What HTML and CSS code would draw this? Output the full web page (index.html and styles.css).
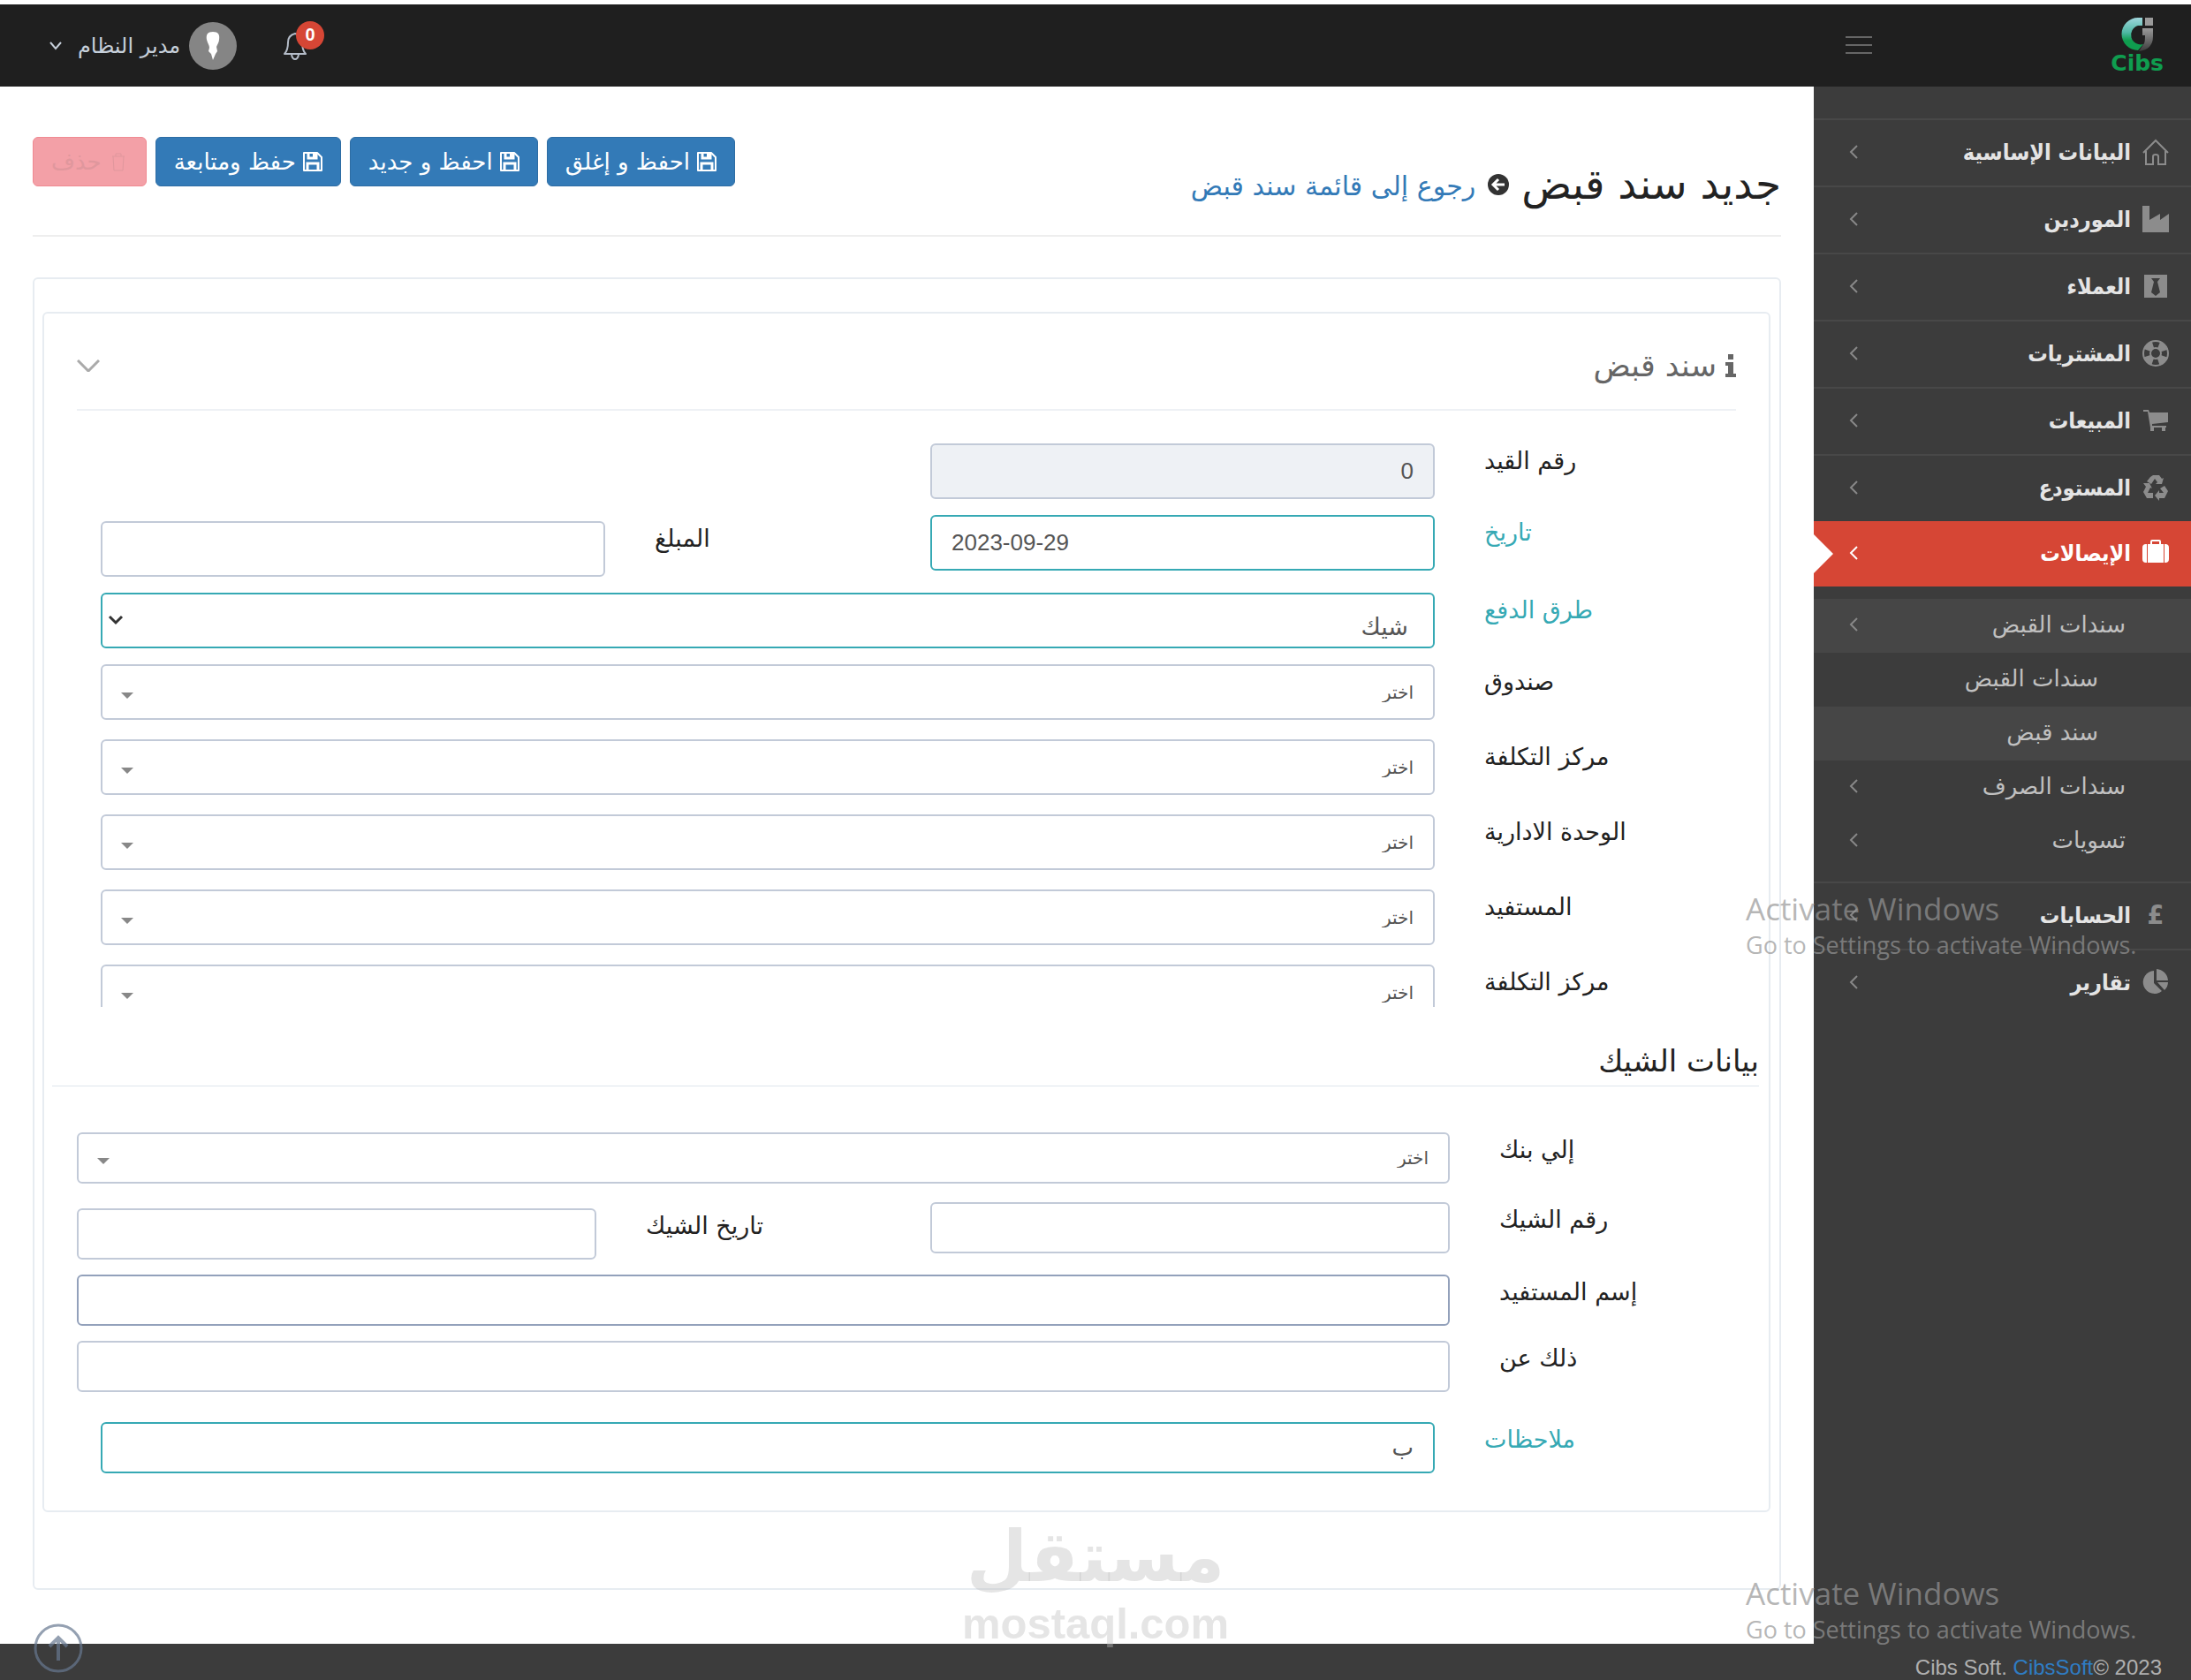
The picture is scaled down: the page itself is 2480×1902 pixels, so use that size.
FILE: index.html
```html
<!DOCTYPE html>
<html lang="ar" dir="rtl">
<head>
  <meta charset="UTF-8" />
  <meta name="viewport" content="width=device-width, initial-scale=1" />
  <title>جديد سند قبض</title>
  <link rel="stylesheet" href="styles.css">
</head>
<body>
  <!-- Shared icon shapes -->
  <svg class="sprite" aria-hidden="true">
    <symbol id="i-save" viewBox="0 0 22 22">
      <path d="M1 1h15l5 5v15H1z" fill="none" stroke="currentColor" stroke-width="2" stroke-linejoin="round"/>
      <path d="M5 21v-8h12v8M6 1v6h9V1" fill="none" stroke="currentColor" stroke-width="3"/>
      <path d="M11 1h3v5h-3z" fill="currentColor"/>
    </symbol>
    <symbol id="i-left" viewBox="0 0 10 16">
      <path d="M9 1L2 8l7 7" fill="none" stroke="currentColor" stroke-width="2"/>
    </symbol>
    <symbol id="i-caret" viewBox="0 0 14 7">
      <path d="M0 0h14L7 7z" fill="currentColor"/>
    </symbol>
  </svg>

  <header class="topbar">
    <div class="brand">
      <a class="logo" href="#">
        <svg class="logo-mark" viewBox="0 0 36 38">
          <defs>
            <linearGradient id="gGreen" x1="0" y1="0" x2="0" y2="1">
              <stop offset="0" stop-color="#9fd6dc"/>
              <stop offset="0.45" stop-color="#4fb8a5"/>
              <stop offset="0.7" stop-color="#0f9d4f"/>
            </linearGradient>
            <linearGradient id="gGrey" x1="0" y1="0" x2="0" y2="1">
              <stop offset="0" stop-color="#9a9a9a"/>
              <stop offset="1" stop-color="#3c3c3c"/>
            </linearGradient>
          </defs>
          <path d="M24 0H19A18 18 0 0 0 19 37L25 30A10 10 0 0 1 19 9H24Z" fill="url(#gGreen)"/>
          <path d="M27 0h9v9h-9z" fill="#9a9a9a"/>
          <path d="M24 12h12v9q0 15-16 17l6-9q1-2 1-9h-3z" fill="url(#gGrey)"/>
        </svg>
        <span class="logo-text">Cibs</span>
      </a>
      <button class="menu-toggle" type="button" aria-label="القائمة"><i></i><i></i><i></i></button>
    </div>
    <div class="top-menu">
      <button class="bell" type="button">
        <svg viewBox="0 0 28 34"><path d="M2 26q4-4 4-13 0-8 8-10 8 2 8 10 0 9 4 13zM10 27q1 5 4 5t4-5" fill="none" stroke="#b4bcc8" stroke-width="2" stroke-linejoin="round"/></svg>
        <span class="badge">0</span>
      </button>
      <button class="user" type="button">
        <svg class="avatar" viewBox="0 0 54 54"><circle cx="27" cy="27" r="27" fill="#858585"/><path d="M27 11c-6 0-8 3-7 9 1 4 3 6 3 9l-1 4 3 3 2 7 3-7 2-3-1-5c1-3 3-5 3-8 1-6-1-9-7-9z" fill="#fff"/></svg>
        <span>مدير النظام</span>
        <svg class="user-arrow" viewBox="0 0 14 10"><path d="M1 1l6 7 6-7" fill="none" stroke="#c6cfda" stroke-width="2"/></svg>
      </button>
    </div>
  </header>

  <div class="page">
    <nav class="sidebar">
      <ul class="menu">
        <li><a href="#">
          <svg class="icon" viewBox="0 0 30 30"><path d="M1 16L15 2l14 14M4 14v15h8v-9q0-2 3-2t3 2v9h8V14" fill="none" stroke="currentColor" stroke-width="2"/></svg>
          <span>البيانات الإساسية</span><svg class="chev"><use href="#i-left"/></svg></a></li>
        <li><a href="#">
          <svg class="icon" viewBox="0 0 30 30"><path d="M0 0h8v16l12-7v7l10-7v21H0z" fill="currentColor"/></svg>
          <span>الموردين</span><svg class="chev"><use href="#i-left"/></svg></a></li>
        <li><a href="#">
          <svg class="icon" viewBox="0 0 30 30"><path d="M2 2h26v26H2z" fill="currentColor"/><path d="M10 6h10l-3 4 3 12-5 4-5-4 3-12z" fill="#3c3c3c"/></svg>
          <span>العملاء</span><svg class="chev"><use href="#i-left"/></svg></a></li>
        <li><a href="#">
          <svg class="icon" viewBox="0 0 30 30"><circle cx="15" cy="15" r="14" fill="none" stroke="currentColor" stroke-width="2"/><circle cx="15" cy="15" r="10" fill="none" stroke="currentColor" stroke-width="9" stroke-dasharray="9 6.71" stroke-dashoffset="-3.35"/><circle cx="15" cy="15" r="6" fill="none" stroke="currentColor" stroke-width="2"/></svg>
          <span>المشتريات</span><svg class="chev"><use href="#i-left"/></svg></a></li>
        <li><a href="#">
          <svg class="icon" viewBox="0 0 30 30"><path d="M1 3h6l1 3h21v11l-18 2v2h16v2H9L6 5H1z" fill="currentColor"/><path d="M9 23h4v4H9zM22 23h4v4h-4z" fill="currentColor"/></svg>
          <span>المبيعات</span><svg class="chev"><use href="#i-left"/></svg></a></li>
        <li><a href="#">
          <svg class="icon" viewBox="0 0 30 30"><g fill="currentColor"><path d="M9 3l3-2h7l3 4 2-1-2 7h-7l2-2-3-4-4 6-5-3z"/><path d="M25 13l4 6-4 8h-6v3l-5-6 5-6v3h5l-4-5z"/><path d="M1 10h7l3 6-2-1-3 6h6v6H5l-4-7 3-6z"/></g></svg>
          <span>المستودع</span><svg class="chev"><use href="#i-left"/></svg></a></li>
        <li class="active"><a href="#">
          <svg class="icon" viewBox="0 0 30 30"><path d="M5 5v21H4q-4 0-4-4V9q0-4 4-4zM25 5h1q4 0 4 4v13q0 4-4 4h-1zM9 5V2q0-2 2-2h8q2 0 2 2v3h3v21H6V5zM11 2v3h8V2z" fill="currentColor" fill-rule="evenodd"/></svg>
          <span>الإيصالات</span><svg class="chev"><use href="#i-left"/></svg></a>
          <ul class="submenu">
            <li class="open"><a href="#"><span>سندات القبض</span><svg class="chev"><use href="#i-left"/></svg></a></li>
            <li class="level3"><a href="#"><span>سندات القبض</span></a></li>
            <li class="level3 open"><a href="#"><span>سند قبض</span></a></li>
            <li><a href="#"><span>سندات الصرف</span><svg class="chev"><use href="#i-left"/></svg></a></li>
            <li><a href="#"><span>تسويات</span><svg class="chev"><use href="#i-left"/></svg></a></li>
          </ul>
        </li>
        <li><a href="#"><b class="icon pound">£</b>
          <span>الحسابات</span><svg class="chev"><use href="#i-left"/></svg></a></li>
        <li><a href="#">
          <svg class="icon" viewBox="0 0 30 30"><path d="M13 2v14l9 9A13 13 0 1 1 13 2zM16 0a14 14 0 0 1 13 13H16zM17 15h12q0 5-4 9z" fill="currentColor"/></svg>
          <span>تقارير</span><svg class="chev"><use href="#i-left"/></svg></a></li>
      </ul>
    </nav>

    <main class="content">
      <div class="page-head">
        <h1>جديد سند قبض
          <svg class="back-icon" viewBox="0 0 24 24"><circle cx="12" cy="12" r="12" fill="#333"/><path d="M19 12H7M12 6l-6 6 6 6" fill="none" stroke="#fff" stroke-width="3"/></svg>
          <a href="#">رجوع إلى قائمة سند قبض</a>
        </h1>
        <div class="actions">
          <button class="btn" type="submit" form="voucher"><svg><use href="#i-save"/></svg>احفظ و إغلق</button>
          <button class="btn" type="submit" form="voucher"><svg><use href="#i-save"/></svg>احفظ و جديد</button>
          <button class="btn" type="submit" form="voucher"><svg><use href="#i-save"/></svg>حفظ ومتابعة</button>
          <button class="btn btn-delete" type="button" disabled><svg viewBox="0 0 22 22"><path d="M4 5h14M8 5V2h6v3M5 5l1 16h10l1-16" fill="none" stroke="currentColor"/></svg>حذف</button>
        </div>
      </div>

      <form class="portlet" id="voucher">
        <div class="panel">
          <div class="panel-head">
            <h2><svg viewBox="0 0 12 26"><path d="M3 0h6v6H3zM0 9h9v13h3v4H0v-4h3v-9H0z" fill="#666"/></svg>سند قبض</h2>
            <button class="collapse" type="button" aria-label="طي"><svg viewBox="0 0 26 14"><path d="M1 1l12 12L25 1" fill="none" stroke="#aaa" stroke-width="3"/></svg></button>
          </div>

          <div class="rows">
            <div class="row tight">
              <label for="entryNo">رقم القيد</label>
              <input type="text" id="entryNo" value="0" readonly />
            </div>
            <div class="row tight success">
              <label for="date">تاريخ</label>
              <input type="text" id="date" value="2023-09-29" dir="ltr" />
              <label class="plain lower" for="amount">المبلغ</label>
              <input class="plain lower" type="text" id="amount" />
            </div>
            <div class="row tight success">
              <label for="payment">طرق الدفع</label>
              <div class="select wide">
                <select class="native" id="payment"><option>شيك</option></select>
                <svg class="native-arrow" viewBox="0 0 18 12"><path d="M2 2l7 7 7-7" fill="none" stroke="#333" stroke-width="3"/></svg>
              </div>
            </div>
            <div class="row">
              <label for="box">صندوق</label>
              <div class="select wide"><select id="box"><option>اختر</option></select><svg class="caret"><use href="#i-caret"/></svg></div>
            </div>
            <div class="row">
              <label for="costCenter">مركز التكلفة</label>
              <div class="select wide"><select id="costCenter"><option>اختر</option></select><svg class="caret"><use href="#i-caret"/></svg></div>
            </div>
            <div class="row">
              <label for="unit">الوحدة الادارية</label>
              <div class="select wide"><select id="unit"><option>اختر</option></select><svg class="caret"><use href="#i-caret"/></svg></div>
            </div>
            <div class="row">
              <label for="payee">المستفيد</label>
              <div class="select wide"><select id="payee"><option>اختر</option></select><svg class="caret"><use href="#i-caret"/></svg></div>
            </div>
            <div class="row cut">
              <label for="costCenter2">مركز التكلفة</label>
              <div class="select wide"><select id="costCenter2"><option>اختر</option></select><svg class="caret"><use href="#i-caret"/></svg></div>
            </div>
          </div>

          <h3>بيانات الشيك</h3>
          <div class="rows cheque">
            <div class="row">
              <label for="bank">إلي بنك</label>
              <div class="select wide"><select id="bank"><option>اختر</option></select><svg class="caret"><use href="#i-caret"/></svg></div>
            </div>
            <div class="row tight">
              <label for="chequeNo">رقم الشيك</label>
              <input type="text" id="chequeNo" />
              <label class="lower" for="chequeDate">تاريخ الشيك</label>
              <input class="lower" type="text" id="chequeDate" />
            </div>
            <div class="row tight">
              <label for="payeeName">إسم المستفيد</label>
              <input class="wide focused" type="text" id="payeeName" />
            </div>
            <div class="row tight">
              <label for="about">ذلك عن</label>
              <input class="wide" type="text" id="about" />
            </div>
          </div>
          <div class="rows notes">
            <div class="row success">
              <label for="notes">ملاحظات</label>
              <input class="wide" type="text" id="notes" value="ب" />
            </div>
          </div>
        </div>
      </form>
    </main>
  </div>

  <footer class="footer" dir="ltr">Cibs Soft. <a href="#">CibsSoft</a>© 2023</footer>

  <a class="to-top" href="#" aria-label="أعلى"><svg viewBox="0 0 56 56"><circle cx="28" cy="28" r="26" fill="none" stroke="#687991" stroke-width="3"/><path d="M28 42V16M18 26l10-10 10 10" fill="none" stroke="#687991" stroke-width="4"/></svg></a>

  <div class="activate first" dir="ltr"><p>Activate Windows</p><p>Go to Settings to activate Windows.</p></div>
  <div class="activate second" dir="ltr"><p>Activate Windows</p><p>Go to Settings to activate Windows.</p></div>
  <div class="mostaql"><span>مستقل</span><span dir="ltr">mostaql.com</span></div>
</body>
</html>
```

FILE: styles.css
```css
:root {
  --dark: #3c3c3c;
  --topbar: #1f1f1f;
  --red: #d64635;
  --blue: #337ab7;
  --teal: #36a9b4;
  --border: #c2cad8;
  --line: #e7ecf1;
  --sidebar: 427px;
}

* {
  box-sizing: border-box;
}

body {
  margin: 0;
  position: relative;
  min-height: 100vh;
  display: flex;
  flex-direction: column;
  background: var(--dark);
  font-family: "DejaVu Sans", sans-serif;
  font-size: 26px;
  color: #222;
}

button, input, select {
  font: inherit;
  color: inherit;
}

button {
  background: none;
  border: none;
  padding: 0;
  cursor: pointer;
}

a {
  text-decoration: none;
}

ul, h1, h2, h3, p {
  list-style: none;
  margin: 0;
  padding: 0;
  font-weight: normal;
}

svg {
  display: block;
  flex: none;
}

.sprite {
  position: absolute;
  width: 0;
  height: 0;
}

/* Top bar */
.topbar {
  height: 98px;
  border-top: 5px solid #fff;
  background: var(--topbar);
  display: flex;
  justify-content: space-between;
}

.brand {
  width: var(--sidebar);
  padding: 0 31px 0 36px;
  display: flex;
  justify-content: space-between;
  align-items: flex-start;
}

.logo {
  display: flex;
  flex-direction: column;
  align-items: center;
  padding-top: 15px;
}

.logo-mark {
  width: 36px;
  height: 38px;
}

.logo-text {
  font-size: 25px;
  line-height: 28px;
  font-weight: bold;
  color: #0f9d4f;
}

.menu-toggle {
  width: 30px;
  height: 92px;
  display: flex;
  flex-direction: column;
  justify-content: center;
  gap: 7px;
}

.menu-toggle i {
  height: 2px;
  background: #666;
}

.top-menu {
  display: flex;
  align-items: center;
  gap: 52px;
  padding-left: 56px;
}

.bell {
  position: relative;
}

.bell svg {
  width: 28px;
  height: 34px;
}

.badge {
  position: absolute;
  top: -11px;
  left: 15px;
  width: 32px;
  height: 32px;
  border-radius: 50%;
  background: var(--red);
  color: #fff;
  font: bold 20px/30px "Liberation Sans", sans-serif;
}

.user {
  display: flex;
  align-items: center;
  gap: 10px;
  font-size: 24px;
  color: #c6cfda;
}

.avatar {
  width: 54px;
  height: 54px;
}

.user-arrow {
  width: 14px;
  height: 10px;
  margin-right: 8px;
}

/* Sidebar */
.page {
  flex: 1;
  display: flex;
}

.sidebar {
  width: var(--sidebar);
  flex: none;
  padding-top: 36px;
}

.menu > li {
  border-top: 2px solid #484848;
}

.menu a {
  display: flex;
  align-items: center;
  height: 74px;
  padding: 0 25px 2px 40px;
  color: #e4e4e4;
}

.menu > li > a {
  font-family: "DejaVu Sans Condensed", "DejaVu Sans", sans-serif;
  font-size: 25px;
  font-weight: bold;
}

.icon {
  width: 30px;
  height: 30px;
  margin-left: 13px;
  color: #8c8c8c;
}

.pound {
  font-size: 30px;
  line-height: 30px;
  text-align: center;
}

.chev {
  width: 10px;
  height: 16px;
  margin-right: auto;
  color: #888;
}

.menu > .active {
  border: none;
  padding-bottom: 15px;
}

.active > a {
  position: relative;
  background: var(--red);
  color: #fff;
}

.active > a .icon, .active > a .chev {
  color: #fff;
}

.active > a::after {
  content: "";
  position: absolute;
  left: 0;
  top: 15px;
  border: 22px solid transparent;
  border-left-color: #fff;
  border-right: none;
}

.submenu {
  padding-top: 14px;
}

.submenu a {
  height: 61px;
  padding-right: 74px;
  padding-bottom: 4px;
  color: #c0c0c0;
}

.submenu .level3 a {
  padding-right: 105px;
}

.submenu .open {
  background: #464646;
}

/* Content */
.content {
  flex: 1;
  min-width: 0;
  background: #fff;
  padding: 57px 37px 61px;
}

.page-head {
  display: flex;
  justify-content: space-between;
  align-items: flex-start;
  height: 113px;
  border-bottom: 2px solid #eee;
}

.page-head h1 {
  display: flex;
  align-items: center;
  gap: 14px;
  padding-top: 24px;
  font-size: 47px;
  line-height: 56px;
}

.page-head h1 a {
  font-size: 30px;
  padding-top: 4px;
  color: var(--blue);
}

.back-icon {
  width: 24px;
  height: 24px;
}

.actions {
  display: flex;
  gap: 10px;
}

.btn {
  display: flex;
  align-items: center;
  gap: 8px;
  height: 56px;
  padding: 0 20px;
  border: 1px solid #2e6da4;
  border-radius: 6px;
  background: var(--blue);
  color: #fff;
}

.btn svg {
  width: 22px;
  height: 22px;
}

.btn-delete {
  background: #f3a0a7;
  border-color: #f08a92;
  color: #e0979d;
}

.portlet {
  margin-top: 46px;
  border: 2px solid var(--line);
  border-radius: 6px;
  padding: 37px 10px 86px 9px;
}

.panel {
  border: 2px solid var(--line);
  border-radius: 6px;
  padding-bottom: 42px;
}

.panel-head {
  display: flex;
  justify-content: space-between;
  align-items: center;
  height: 110px;
  margin: 0 37px;
  padding-top: 10px;
  border-bottom: 2px solid #eef1f5;
}

.panel-head h2 {
  display: flex;
  align-items: center;
  gap: 10px;
  font-size: 35px;
  line-height: 50px;
  color: #666;
}

.panel-head h2 svg {
  width: 12px;
  height: 26px;
}

.collapse svg {
  width: 26px;
  height: 14px;
}

/* Form rows */
.rows {
  --field: 63px;
  --mid-label: 256px;
  padding: 37px 37px 0 64px;
}

.row {
  display: grid;
  grid-template-columns: 285px 1fr var(--mid-label) 1fr;
  column-gap: 56px;
  align-items: start;
  margin-bottom: 22px;
}

.row.tight {
  margin-bottom: 18px;
}

.row.cut {
  height: 48px;
  margin: 0;
  overflow: hidden;
}

.row label {
  text-align: left;
  font-size: 27px;
  line-height: 40px;
  white-space: nowrap;
}

.wide {
  grid-column: 2 / -1;
}

.lower {
  margin-top: 7px;
}

.row input, .row select {
  width: 100%;
  height: var(--field);
  border: 2px solid var(--border);
  border-radius: 6px;
  background: #fff;
  padding: 0 22px;
  color: #555;
  font-size: 26px;
  font-family: "Liberation Sans", "DejaVu Sans", sans-serif;
}

.row input[readonly] {
  background: #eef1f5;
}

.row input.focused {
  border-color: #93a1bb;
}

.row.success label:not(.plain) {
  color: var(--teal);
}

.row.success input:not(.plain), .row.success select {
  border-color: var(--teal);
}

.select {
  position: relative;
}

.row select {
  appearance: none;
  font-size: 20px;
}

.row select.native {
  font-size: 27px;
  padding: 14px 28px 0;
}

.caret {
  position: absolute;
  left: 23px;
  top: 50%;
  width: 14px;
  height: 7px;
  color: #888;
}

.native-arrow {
  position: absolute;
  left: 8px;
  top: 25px;
  width: 18px;
  height: 12px;
}

.panel h3 {
  margin: 0 11px 0 9px;
  padding: 36px 0 3px;
  border-bottom: 1px solid #dfe5ec;
  font-size: 34px;
  line-height: 50px;
}

.cheque {
  --field: 58px;
  --mid-label: 266px;
  padding: 52px 20px 0 37px;
}

.cheque .row {
  margin-bottom: 21px;
}

.cheque .row.tight {
  margin-bottom: 17px;
}

.notes {
  --field: 58px;
  padding-top: 17px;
}

.notes .row {
  margin: 0;
}

/* Footer */
.footer {
  height: 42px;
  padding: 0 33px;
  text-align: right;
  font: 24px/54px "Liberation Sans", sans-serif;
  color: #b0b0b0;
}

.footer a {
  color: #2f7cc4;
}

.to-top {
  position: absolute;
  left: 38px;
  bottom: 9px;
  opacity: 0.7;
}

.to-top svg {
  width: 56px;
  height: 56px;
}

/* Overlays */
.activate {
  position: absolute;
  left: 1976px;
  font: 27px/38px "Open Sans", sans-serif;
  color: rgba(150, 150, 150, 0.7);
  white-space: nowrap;
  pointer-events: none;
}

.activate p:first-child {
  font-size: 35px;
  line-height: 44px;
}

.first {
  top: 1007px;
}

.second {
  top: 1782px;
}

.mostaql {
  position: absolute;
  left: 1091px;
  top: 1716px;
  width: 298px;
  display: flex;
  flex-direction: column;
  align-items: center;
  color: rgba(190, 190, 190, 0.4);
  font: bold 49px/56px "Liberation Sans", sans-serif;
  pointer-events: none;
}

.mostaql span:first-child {
  font: bold 80px/94px "DejaVu Sans", sans-serif;
}
```
